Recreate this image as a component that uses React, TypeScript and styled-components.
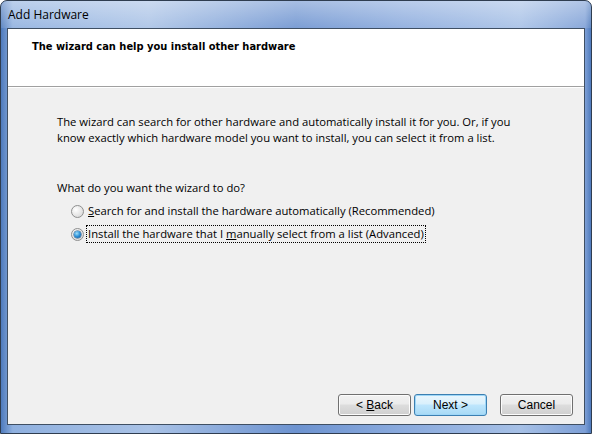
import styled, { createGlobalStyle } from 'styled-components';

const GlobalStyle = createGlobalStyle`
  html, body {
    margin: 0;
    padding: 0;
    background: #ffffff;
  }
`;

export default function App() {
  return (
    <>
      <GlobalStyle />
      <Window>
        <TitleBar>Add Hardware</TitleBar>
        <Client>
          <Header>
            <HeaderTitle>The wizard can help you install other hardware</HeaderTitle>
          </Header>
          <Body>
            <Intro>
              The wizard can search for other hardware and automatically install it for you. Or, if you
              <br />
              know exactly which hardware model you want to install, you can select it from a list.
            </Intro>
            <Question>What do you want the wizard to do?</Question>
            <Options>
              <Option>
                <Radio />
                <OptionLabel>
                  <u>S</u>earch for and install the hardware automatically (Recommended)
                </OptionLabel>
              </Option>
              <Option>
                <Radio $checked />
                <OptionLabel $focused>
                  Install the hardware that I <u>m</u>anually select from a list (Advanced)
                </OptionLabel>
              </Option>
            </Options>
          </Body>
          <Footer>
            <Button>
              &lt; <u>B</u>ack
            </Button>
            <Button $default>Next &gt;</Button>
            <CancelButton>Cancel</CancelButton>
          </Footer>
        </Client>
      </Window>
    </>
  );
}

const Window = styled.div`
  width: 592px;
  height: 434px;
  box-sizing: border-box;
  display: flex;
  flex-direction: column;
  border: 1px solid #2f3d50;
  border-radius: 7px 7px 0 0;
  background: linear-gradient(
    90deg,
    #4f7bbd 0%,
    #8fb0df 2%,
    #a9c2e6 25%,
    #6d93d0 50%,
    #8aaadd 68%,
    #a6c0e6 88%,
    #7d9fd6 99%,
    #4f7bbd 100%
  );
  overflow: hidden;
`;

const TitleBar = styled.div`
  height: 27px;
  flex: none;
  display: flex;
  align-items: center;
  padding-left: 7px;
  font-family: 'Open Sans', 'Noto Sans', sans-serif;
  font-size: 12px;
  color: #000;
  background: linear-gradient(180deg, rgba(255, 255, 255, 0.4), rgba(255, 255, 255, 0.1));
`;

const Client = styled.div`
  flex: 1;
  margin: 0 6px 8px 6px;
  display: flex;
  flex-direction: column;
  background: #f0f0f0;
  border: 1px solid #3f4f63;
`;

const Header = styled.div`
  height: 58px;
  flex: none;
  background: #ffffff;
  border-bottom: 1px solid #a0a0a0;
  box-shadow: 0 1px 0 #ffffff;
  padding: 11px 0 0 24px;
  box-sizing: border-box;
`;

const HeaderTitle = styled.div`
  font-family: 'DejaVu Sans Condensed', 'DejaVu Sans', sans-serif;
  font-weight: bold;
  font-size: 11px;
  color: #000;
`;

const Body = styled.div`
  flex: 1;
  padding: 27px 0 0 49px;
  font-family: 'Open Sans', 'Noto Sans', sans-serif;
  font-size: 11.25px;
  color: #000;
`;

const Intro = styled.p`
  margin: 0;
  line-height: 16px;
`;

const Question = styled.p`
  margin: 34px 0 0 0;
  line-height: 16px;
`;

const Options = styled.div`
  display: flex;
  flex-direction: column;
  gap: 5px;
  margin-top: 6px;
  padding-left: 14px;
`;

const Option = styled.div`
  display: flex;
  align-items: center;
  gap: 2px;
  height: 18px;
`;

const Radio = styled.span<{ $checked?: boolean }>`
  position: relative;
  width: 13px;
  height: 13px;
  box-sizing: border-box;
  border-radius: 50%;
  border: 1px solid #8e8f8f;
  background: radial-gradient(circle at 35% 35%, #ffffff 0%, #e6e6e6 55%, #d2d2d2 100%);
  flex: none;

  &::after {
    content: '';
    display: ${(p) => (p.$checked ? 'block' : 'none')};
    position: absolute;
    left: 2px;
    top: 2px;
    width: 7px;
    height: 7px;
    border-radius: 50%;
    background: radial-gradient(circle at 40% 35%, #9fe0fb 0%, #2c8fd6 50%, #0c4a87 100%);
    box-shadow: 0 0 0 0.5px #27517a;
  }
`;

const OptionLabel = styled.span<{ $focused?: boolean }>`
  line-height: 16px;
  padding: 0 1px;
  border: 1px dotted ${(p) => (p.$focused ? '#000' : 'transparent')};
`;

const Footer = styled.div`
  display: flex;
  justify-content: flex-end;
  align-items: center;
  padding: 0 11px 8px 0;
  gap: 3px;
`;

const Button = styled.button<{ $default?: boolean }>`
  width: 73px;
  height: 22px;
  padding: 0;
  font-family: 'Liberation Sans', Arial, sans-serif;
  font-size: 12px;
  color: #000;
  border-radius: 3px;
  border: 1px solid ${(p) => (p.$default ? '#3c7fb1' : '#707070')};
  background: ${(p) =>
    p.$default
      ? 'linear-gradient(180deg, #eaf6fd 0%, #d9f0fc 45%, #bee6fd 50%, #a7d9f5 100%)'
      : 'linear-gradient(180deg, #f2f2f2 0%, #ebebeb 45%, #dddddd 50%, #cfcfcf 100%)'};
  box-shadow: inset 0 0 0 1px ${(p) => (p.$default ? '#9ed7f8' : '#fcfcfc')};
`;

const CancelButton = styled(Button)`
  margin-left: 10px;
`;
